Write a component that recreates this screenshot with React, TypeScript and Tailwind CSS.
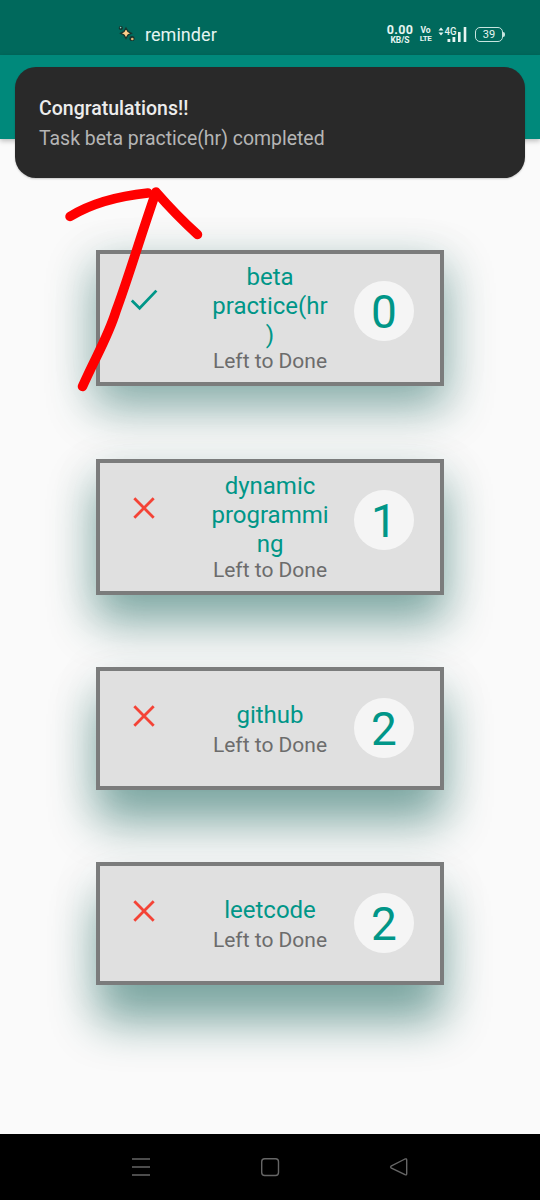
type Task = {
  lines: string[];
  left: number;
  done: boolean;
  box: string;
  title: string;
};

const tasks: Task[] = [
  {
    lines: ["beta", "practice(hr", ")"],
    left: 0,
    done: true,
    box: "h-[136px] shadow-[0_20px_46px_2px_rgba(0,85,75,0.44),0_8px_50px_6px_rgba(0,85,75,0.05)]",
    title: "pt-[9.3px]",
  },
  {
    lines: ["dynamic", "programmi", "ng"],
    left: 1,
    done: false,
    box: "mt-[73px] h-[136px] shadow-[0_26px_46px_1px_rgba(0,85,75,0.48),0_8px_50px_6px_rgba(0,85,75,0.05)]",
    title: "pt-[9.3px]",
  },
  {
    lines: ["github"],
    left: 2,
    done: false,
    box: "mt-[72px] h-[123px] shadow-[0_32px_46px_0px_rgba(0,85,75,0.49),0_8px_50px_6px_rgba(0,85,75,0.05)]",
    title: "pt-[29.6px]",
  },
  {
    lines: ["leetcode"],
    left: 2,
    done: false,
    box: "mt-[72px] h-[123px] shadow-[0_38px_46px_-1px_rgba(0,85,75,0.49),0_8px_50px_6px_rgba(0,85,75,0.05)]",
    title: "pt-[29.6px]",
  },
];

function Mark({ done }: { done: boolean }) {
  return (
    <svg className={`ml-[26px] h-9 w-9 shrink-0 ${done ? "mt-[28px]" : "mt-[27px]"}`} viewBox="0 0 36 36" fill="none">
      {done ? (
        <path d="M5.8 18.6 L13.6 26.2 L30.4 8.6" stroke="#009688" strokeWidth="2.8" />
      ) : (
        <path d="M8.3 8.3 L27.7 27.7 M27.7 8.3 L8.3 27.7" stroke="#f44336" strokeWidth="2.8" />
      )}
    </svg>
  );
}

function TaskCard({ task }: { task: Task }) {
  return (
    <div className={`flex w-[348px] items-start border-4 border-[#7b7c7c] bg-[#e0e0e0] ${task.box}`}>
      <Mark done={task.done} />
      <div className={`ml-12 w-[120px] text-center whitespace-nowrap ${task.title}`}>
        {task.lines.map((line) => (
          <div key={line} className="text-[24px] leading-[28.8px] text-[#009688]">
            {line}
          </div>
        ))}
        <div className={`text-[21px] leading-6 text-[#6c6c6c] ${task.lines.length > 1 ? "-mt-[0.5px]" : "mt-[4px]"}`}>
          Left to Done
        </div>
      </div>
      <div className="mt-[27px] ml-6 flex h-[60px] w-[60px] items-center justify-center rounded-full bg-[#f5f5f5] pt-px text-[46px] leading-none text-[#009688]">
        {task.left}
      </div>
    </div>
  );
}

function StatusBar() {
  return (
    <div className="flex h-[55px] items-start bg-[#00695c] text-[#e6f5f2]">
      <svg className="mt-[25px] ml-[118px] h-[18px] w-[18px]" viewBox="0 0 18 18">
        <path d="M8 3 L10 6.6 L13.4 8.3 L10 10 L8 13.4 L6 10 L2.6 8.3 L6 6.6 Z" fill="#ffcf8a" stroke="#17352d" strokeWidth="1.3" />
        <circle cx="2.8" cy="3" r="2.1" fill="#17352d" />
        <circle cx="2.6" cy="2.6" r="0.8" fill="#8fd0c5" />
        <circle cx="14" cy="13.5" r="2.6" fill="#17352d" />
        <circle cx="14.3" cy="14" r="1.3" fill="#e9b878" />
      </svg>
      <div className="mt-[23px] ml-[9px] w-[80px] text-[18px] leading-6 tracking-[0.05px]">reminder</div>
      <div className="mt-[24px] ml-[160px] w-[30px] text-center font-bold whitespace-nowrap">
        <div className="text-[12.5px] leading-[12px] tracking-[0.4px]">0.00</div>
        <div className="text-[8.5px] leading-[9px]">KB/S</div>
      </div>
      <div className="mt-[26px] ml-[4px] w-[13px] text-center font-bold whitespace-nowrap">
        <div className="text-[8.5px] leading-[8px]">Vo</div>
        <div className="text-[8px] leading-[9px] tracking-[-0.5px]">LTE</div>
      </div>
      <svg className="mt-[25px] ml-[6px] h-[19px] w-[30px]" viewBox="0 0 30 19">
        <path d="M0.5 5.5 L3 2.5 L5.5 5.5 Z M0.5 7.5 L5.5 7.5 L3 10.5 Z M9.5 14 h2.8 v3 h-2.8 Z M14.5 12 h2.8 v5 h-2.8 Z M20 7 h2.6 v10 H20 Z M25.7 2 h2.6 v15 h-2.6 Z" fill="#e6f5f2" />
        <text x="6.5" y="10" fontSize="10.5" textLength="12" lengthAdjust="spacingAndGlyphs" fontFamily="Roboto, sans-serif" fontWeight="500" fill="#e6f5f2">4G</text>
      </svg>
      <div className="mt-[27px] ml-[7px] flex items-center">
        <div className="flex h-[15px] w-[28px] items-center justify-center rounded-[5px] border-[1.5px] border-[#c7e5df] text-[11px] leading-none">39</div>
        <div className="h-[5px] w-[2px] rounded-r bg-[#c7e5df]" />
      </div>
    </div>
  );
}

export default function App() {
  return (
    <div className="relative flex h-[1200px] w-[540px] flex-col overflow-hidden bg-[#fafafa] font-['Roboto',sans-serif]">
      <StatusBar />
      <div className="h-[84px] bg-[#00897b] shadow-[0_2px_5px_rgba(0,0,0,0.25)]" />
      <main className="flex flex-1 flex-col items-center pt-[111px]">
        {tasks.map((task) => (
          <TaskCard key={task.lines[0]} task={task} />
        ))}
      </main>
      <nav className="flex h-[66px] items-center justify-between bg-black px-[131px]">
        <svg className="h-5 w-5" viewBox="0 0 20 20" fill="none" stroke="#666" strokeWidth="1.4">
          <path d="M1 2 H19 M1 10 H19 M1 18 H19" />
        </svg>
        <svg className="h-5 w-5" viewBox="0 0 20 20" fill="none" stroke="#666" strokeWidth="1.4">
          <rect x="1.7" y="1.7" width="16.8" height="16.8" rx="3" />
        </svg>
        <svg className="h-5 w-5" viewBox="0 0 20 20" fill="none" stroke="#666" strokeWidth="1.4" strokeLinejoin="round">
          <path d="M2 9.2 L16 2 Q17.7 1.4 17.7 3 V16.8 Q17.7 18.4 16 17.7 L2 10.8 Q1.2 10 2 9.2 Z" />
        </svg>
      </nav>

      <div className="absolute top-[67px] left-[15px] h-[110.5px] w-[510px] rounded-[21px] bg-[#292929] px-6 pt-[27px] shadow-[0_1px_2px_rgba(0,0,0,0.2)]">
        <div className="text-[19.5px] leading-[30px] font-medium text-[#ececec]">Congratulations!!</div>
        <div className="text-[19.45px] leading-[30px] text-[#b5b5b5]">Task beta practice(hr) completed</div>
      </div>

      <svg className="absolute top-0 left-0 h-[420px] w-[540px]" viewBox="0 0 540 420" fill="none" stroke="#ff0000" strokeWidth="9.5" strokeLinecap="round" strokeLinejoin="round">
        <path d="M70 216.5 Q100 198 148 193" />
        <path d="M82.5 386.5 C96 356 108 337 116 311 C129 276 138 244 156 192 Q176 215 197.5 234.5" />
      </svg>
    </div>
  );
}
